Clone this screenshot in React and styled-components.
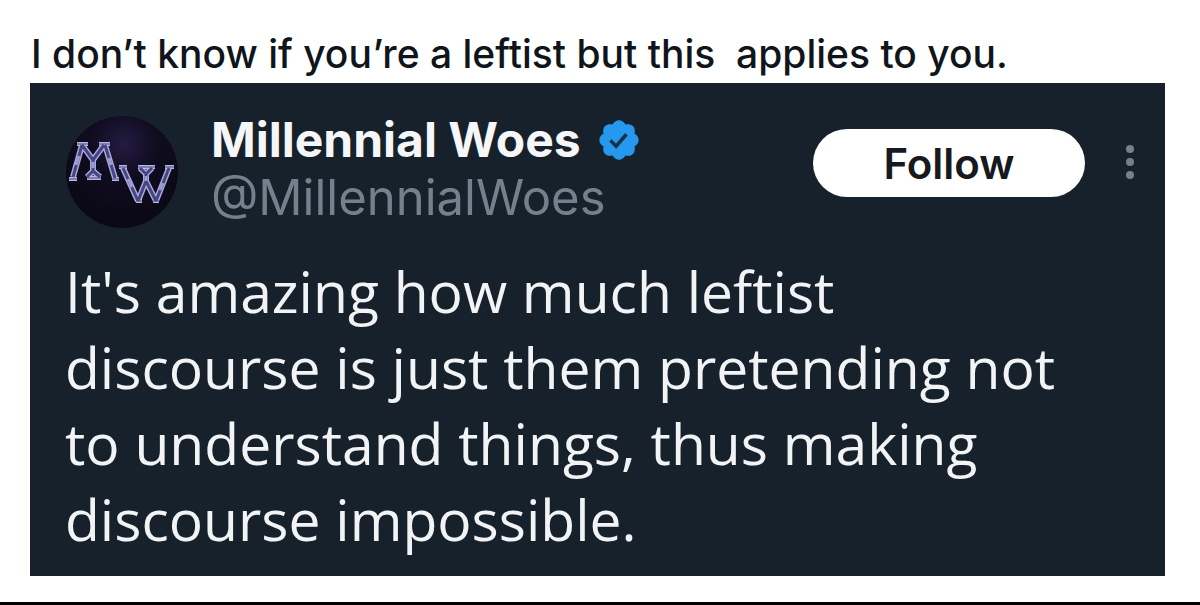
import React from "react";
import styled, { createGlobalStyle } from "styled-components";

const Global = createGlobalStyle`
  * { box-sizing: border-box; }
  body { margin: 0; background: #fff; font-family: Inter, "Noto Sans", sans-serif; }
`;

const Page = styled.main`
  padding: 24px 35px 26px 30px;
  border-bottom: 3px solid #000;
`;

const Caption = styled.p`
  margin: 0;
  padding-left: 1px;
  color: #10151b;
  font-size: 39px;
  font-weight: 450;
  line-height: 59px;
  white-space: pre-wrap;
`;

const Card = styled.article`
  min-height: 493px;
  padding: 32px 27px 16px 35px;
  background: #17212b;
`;

const Header = styled.header`
  display: flex;
  align-items: flex-start;
`;

const Avatar = styled.svg`
  flex: none;
  width: 114px;
  height: 114px;
  margin-right: 32px;
`;

const Names = styled.div`
  flex: 1;
`;

const NameRow = styled.div`
  display: flex;
  align-items: center;
  gap: 15px;
`;

const Name = styled.h1`
  margin: 0;
  color: #f4f6f8;
  font-size: 48px;
  font-weight: 700;
  line-height: 50px;
`;

const Badge = styled.svg`
  width: 46px;
  height: 46px;
`;

const Handle = styled.div`
  color: #74808b;
  font-size: 49px;
  line-height: 66px;
`;

const Follow = styled.button`
  width: 272px;
  height: 68px;
  margin-top: 14px;
  border: 0;
  border-radius: 34px;
  background: #fff;
  color: #16191d;
  font-family: inherit;
  font-size: 42px;
  font-weight: 600;
`;

const More = styled.button`
  width: 16px;
  height: 44px;
  margin: 25px 0 0 37px;
  padding: 0;
  border: 0;
  background: none;
`;

const Post = styled.p`
  margin: 22px 0 0;
  color: #f1f3f4;
  font-family: "Open Sans", "Noto Sans", sans-serif;
  font-size: 57px;
  font-weight: 450;
  line-height: 76px;
`;

const mStrokes = "M17 30 8 62M40 30l10 33M17 30l11 15 11-15M28 45v12M22 62l6-6 7 6";
const wStrokes = "M58 53l15 33M104 53 91 86M73 86l8-20 10 20M81 66v-7M75 53l6 6 6-6";
const serifs = "M12 29h11M34 29h11M4 64h8M22 63h14M47 64h7M54 52h8M73 52h17M100 52h9M71 86h6M88 86h6";

export default function App() {
  return (
    <>
      <Global />
      <Page>
        <Caption>I don’t know if you’re a leftist but this  applies to you.</Caption>
        <Card>
          <Header>
            <Avatar viewBox="0 0 114 114" role="img" aria-label="Millennial Woes">
              <defs>
                <radialGradient id="night" cx="0.52" cy="0.25" r="0.6">
                  <stop offset="0" stopColor="#231b42" />
                  <stop offset="0.5" stopColor="#100c20" />
                  <stop offset="1" stopColor="#0c0917" />
                </radialGradient>
              </defs>
              <circle cx="57" cy="57" r="56" fill="url(#night)" />
              <g fill="none" strokeLinejoin="round">
                <path stroke="#a9a8d8" strokeWidth="6" d={mStrokes + wStrokes} />
                <path stroke="#b9b8e2" strokeWidth="4" d={serifs} />
                <path stroke="#454582" strokeWidth="3" d={mStrokes + wStrokes} />
                <path stroke="#454582" strokeWidth="1" d={serifs} />
                <path stroke="#9c9dd2" strokeWidth="3" d="M14 41l-3 9M44 43l2 7M63 64l4 8M98 68l-3 7M28 47v6M81 61v5" />
              </g>
            </Avatar>
            <Names>
              <NameRow>
                <Name>Millennial Woes</Name>
                <Badge viewBox="0 0 24 24" role="img" aria-label="Verified">
                  <path fill="#2499ee" d="M22.25 12c0-1.43-.88-2.67-2.19-3.34.46-1.39.2-2.9-.81-3.91s-2.52-1.27-3.91-.81c-.66-1.31-1.91-2.19-3.34-2.19s-2.67.88-3.33 2.19c-1.4-.46-2.91-.2-3.92.81s-1.26 2.52-.8 3.91c-1.31.67-2.2 1.91-2.2 3.34s.89 2.67 2.2 3.34c-.46 1.39-.21 2.9.8 3.91s2.52 1.26 3.91.81c.67 1.31 1.91 2.19 3.34 2.19s2.68-.88 3.34-2.19c1.39.45 2.9.2 3.91-.81s1.27-2.52.81-3.91c1.31-.67 2.19-1.91 2.19-3.34z" />
                  <path fill="none" stroke="#17304a" strokeWidth="1.8" d="m7.5 12.2 3 3 5.4-6.2" />
                </Badge>
              </NameRow>
              <Handle>@MillennialWoes</Handle>
            </Names>
            <Follow>Follow</Follow>
            <More aria-label="More">
              <svg width="16" height="44" fill="#74808b"><circle cx="8" cy="9" r="4" /><circle cx="8" cy="22" r="4" /><circle cx="8" cy="35" r="4" /></svg>
            </More>
          </Header>
          <Post>It's amazing how much leftist<br />discourse is just them pretending not<br />to understand things, thus making<br />discourse impossible.</Post>
        </Card>
      </Page>
    </>
  );
}
